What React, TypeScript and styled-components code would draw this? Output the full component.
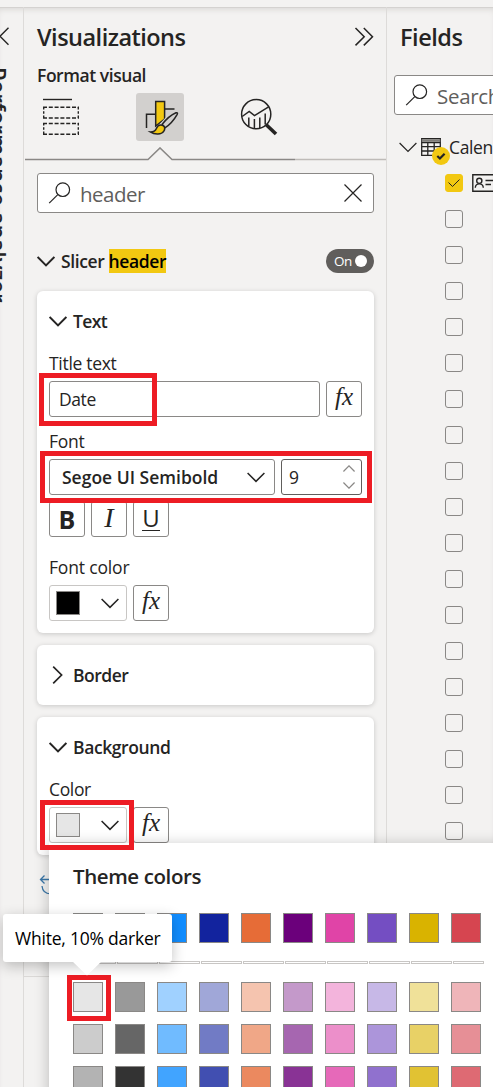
import React from 'react';
import styled, { createGlobalStyle } from 'styled-components';

const Global = createGlobalStyle`
  *, *::before, *::after { box-sizing: border-box; }
  html, body { margin: 0; padding: 0; overflow: hidden; background: #f3f2f1; }
  body { font-family: "Open Sans", "Noto Sans", sans-serif; color: #252423; font-size: 17.5px; }
  svg { display: block; flex: none; }
`;

const Shell = styled.div`
  position: relative;
  width: 493px;
  height: 1087px;
  overflow: hidden;
  display: flex;
  flex-direction: column;
  background: #f3f2f1;
`;
const TopBar = styled.div`
  height: 7px;
  flex: none;
`;
const Panes = styled.div`
  flex: 1;
  min-height: 0;
  display: flex;
  box-shadow: inset 0 1px 0 #d4d2d0, inset 0 5px 6px -3px #d6d4d2;
`;
const SidePane = styled.aside`
  width: 24px;
  flex: none;
  border-right: 1px solid #dddbd9;
  padding-top: 20px;
  overflow: hidden;
`;
const SideTitle = styled.div`
  writing-mode: vertical-rl;
  width: 34px;
  margin: 20px 0 0 -18px;
  line-height: 34px;
  font-size: 22px;
  font-weight: 600;
  white-space: nowrap;
  letter-spacing: 0.1px;
`;
const VizPane = styled.section`
  width: 363px;
  flex: none;
  border-right: 1px solid #dddbd9;
`;
const FieldsPane = styled.section`
  width: 106px;
  flex: none;
  overflow: hidden;
`;

type TextProps = { $size?: number; $weight?: number; $ls?: number; $color?: string };
const Text = styled.span<TextProps>`
  font-size: ${p => p.$size ?? 17.5}px;
  font-weight: ${p => p.$weight ?? 400};
  letter-spacing: ${p => p.$ls ?? 0}px;
  color: ${p => p.$color ?? 'inherit'};
  white-space: pre;
  line-height: 24px;
`;

const PaneHead = styled.header`
  display: flex;
  align-items: center;
  justify-content: space-between;
  height: 34px;
  margin: 13px 12px 0 13px;
`;
const SubHead = styled.div`
  height: 24px;
  margin: 9px 0 0 13px;
  display: flex;
`;
const ModeTabs = styled.nav`
  display: flex;
  gap: 51px;
  margin: 6px 0 0 13px;
  height: 48px;
`;
const ModeTab = styled.div<{ $active?: boolean }>`
  width: 48px;
  height: 48px;
  border-radius: 3px;
  background: ${p => (p.$active ? '#d2d0ce' : 'transparent')};
`;
const SearchBox = styled.div<{ $inset?: boolean }>`
  display: flex;
  align-items: center;
  width: ${p => (p.$inset ? 337 : 140)}px;
  height: 40px;
  margin: ${p => (p.$inset ? '12px 0 0 13px' : '21px 0 0 7px')};
  padding: 2px 11px 0 10px;
  gap: 9px;
  border: 1px solid #8a8886;
  border-radius: 3px;
  background: #fff;

  svg { margin-top: -2px; }
`;
const Grow = styled.div`
  flex: 1;
`;
const SectionRow = styled.div`
  display: flex;
  align-items: center;
  height: 24px;
  margin: 36px 12px 18px 13px;
  gap: 6px;
`;
const Mark = styled.mark`
  background: #f2c811;
  color: #000;
  height: 24px;
  display: inline-block;
`;
const Toggle = styled.div`
  width: 48px;
  height: 24px;
  border-radius: 12px;
  background: #605e5c;
  display: flex;
  align-items: center;
  justify-content: space-between;
  padding: 0 7px 0 8px;
`;
const Knob = styled.i`
  width: 12px;
  height: 12px;
  border-radius: 50%;
  background: #fff;
`;
const Cards = styled.div`
  display: flex;
  flex-direction: column;
  gap: 12px;
  margin: 0 12px 0 13px;
`;
const Card = styled.div<{ $h: number }>`
  height: ${p => p.$h}px;
  border-radius: 6px;
  background: #fff;
  box-shadow: 0 1px 5px rgba(0, 0, 0, 0.18);
  padding: 18px 12px 0;
`;
const CardHead = styled.div`
  display: flex;
  align-items: center;
  gap: 6px;
  height: 24px;
`;
const Label = styled.div<{ $top: number }>`
  height: 24px;
  margin: ${p => p.$top}px 0 6px;
  display: flex;
`;
const Controls = styled.div`
  position: relative;
  display: flex;
  gap: 6px;
`;
const ButtonStrip = styled.div`
  display: flex;
  gap: 6px;
  margin-top: 6px;
`;
const Field = styled.div<{ $w: number; $tone?: string; $pad?: string }>`
  width: ${p => p.$w}px;
  height: 36px;
  flex: none;
  border: 1px solid ${p => p.$tone ?? '#8a8886'};
  border-radius: 3px;
  background: #fff;
  display: flex;
  align-items: center;
  justify-content: space-between;
  padding: ${p => p.$pad ?? '0 9px'};
`;
const SquareButton = styled.button`
  width: 36px;
  height: 36px;
  padding: 0;
  border: 1px solid #8a8886;
  border-radius: 3px;
  background: #fff;
  color: #252423;
  font-family: inherit;
  display: flex;
  align-items: center;
  justify-content: center;
`;
const Fx = styled.span`
  font: italic 25px/30px "Liberation Serif", serif;
  margin-top: -5px;
`;
const ItalicGlyph = styled.span`
  font: italic 28px/30px "Liberation Serif", serif;
  margin-top: -3px;
`;
const Underlined = styled.span`
  font-size: 24px;
  line-height: 22px;
  height: 24px;
  margin-top: -1px;
  border-bottom: 1px solid #252423;
`;
const Chip = styled.i<{ $c: string }>`
  width: 24px;
  height: 24px;
  background: ${p => p.$c};
  border: 1px solid #8a8886;
`;
const Spinner = styled.div`
  display: flex;
  flex-direction: column;
  gap: 10px;
`;
const Callout = styled.div<{ $x: number; $y: number; $w: number; $h: number }>`
  position: absolute;
  left: ${p => p.$x}px;
  top: ${p => p.$y}px;
  width: ${p => p.$w}px;
  height: ${p => p.$h}px;
  border: 5px solid #ed1c24;
  z-index: 3;
`;
const Reset = styled.div`
  margin: 19px 0 0 15px;
`;
const Rule = styled.div`
  height: 1px;
  margin-top: 80px;
  background: #dddbd9;
`;

const TreeRow = styled.div`
  display: flex;
  align-items: center;
  height: 36px;
  margin: 14px 0 0 12px;
`;
const TableIcon = styled.div`
  position: relative;
  width: 20px;
  height: 18px;
  margin: 0 8px 0 4px;
`;
const Badge = styled.div`
  position: absolute;
  left: 11px;
  top: 9px;
`;
const FieldRow = styled.div`
  height: 36px;
  padding-left: 58px;
  display: flex;
  align-items: center;
  gap: 9px;
`;
const Check = styled.i<{ $on?: boolean }>`
  width: 18px;
  height: 18px;
  flex: none;
  border: 1px solid ${p => (p.$on ? '#f2c811' : '#8a8886')};
  border-radius: 3px;
  background: ${p => (p.$on ? '#f2c811' : 'transparent')};
`;

const Popup = styled.div`
  position: absolute;
  left: 49px;
  top: 843px;
  width: 470px;
  height: 270px;
  background: #fff;
  box-shadow: 0 2px 14px rgba(0, 0, 0, 0.24);
  padding: 21px 24px 0;
  z-index: 2;
`;
const PopupTitle = styled.div`
  height: 24px;
  display: flex;
`;
const Swatches = styled.div<{ $top: number }>`
  position: relative;
  display: grid;
  grid-template-columns: repeat(10, 30px);
  gap: 12px;
  margin-top: ${p => p.$top}px;
`;
const Swatch = styled.i<{ $c: string }>`
  height: 30px;
  background: ${p => p.$c};
  border: 1px solid #8a8886;
`;
const Divider = styled.div`
  display: flex;
  gap: 1px;
  margin: 18px 0 0 2px;
`;
const DividerCell = styled.i<{ $w: number }>`
  width: ${p => p.$w}px;
  height: 3px;
  flex: none;
  border: 1px solid #c8c6c4;
`;
const Tooltip = styled.div`
  position: absolute;
  left: 3px;
  top: 914px;
  width: 169px;
  height: 48px;
  border-radius: 3px;
  background: #fff;
  color: #000;
  box-shadow: 0 4px 14px rgba(0, 0, 0, 0.24);
  padding: 12px;
  display: flex;
  z-index: 4;
`;
const Pointer = styled.svg`
  position: absolute;
  left: 69px;
  top: 47px;
`;

const Down = ({ stroke = 1.5 }: { stroke?: number }) => (
  <svg width="18" height="11" viewBox="0 0 18 11" fill="none" stroke="#252423" strokeWidth={stroke}>
    <path d="M.6 1 9 9.4 17.4 1" />
  </svg>
);
const Right = () => (
  <svg width="18" height="18" viewBox="0 0 18 18" fill="none" stroke="#252423" strokeWidth="1.7">
    <path d="M4.2 .6 12.6 9 4.2 17.4" />
  </svg>
);
const Magnifier = () => (
  <svg width="23" height="22" viewBox="0 0 23 22" fill="none" stroke="#252423" strokeWidth="1.2">
    <circle cx="14.8" cy="7.7" r="6.8" />
    <path d="M9.8 12.6 1.2 21.2" />
  </svg>
);
const BuildIcon = () => (
  <svg width="48" height="48" viewBox="0 0 48 48" fill="none" stroke="#252423" strokeWidth="1.4">
    <path d="M6 6.5H35" />
    <g strokeDasharray="4 1.8">
      <path d="M6 14.3H42M6 25H42M6 30.5H42M6 41.3H42" />
    </g>
    <g strokeDasharray="2.6 1.6">
      <path d="M6.7 14V25.5M41.3 14V25.5M6.7 30V42M41.3 30V42" />
    </g>
  </svg>
);
const FormatIcon = () => (
  <svg width="48" height="48" viewBox="0 0 48 48" fill="none" stroke="#252423" strokeWidth="1.5">
    <path d="M10.5 35V21.3H19.5M29 16H38.5" />
    <path d="M19.7 8.5H28.6V26L19.7 33Z" fill="#f2c811" />
    <path d="M26.2 31.3C30 26.5 35 22 40 19.8 41.5 19.3 41.8 20 41.2 21.3 38 27 34 31.5 28.9 34.9Z" fill="#d2d0ce" stroke="#d2d0ce" strokeWidth="4" />
    <path d="M26.2 31.3C30 26.5 35 22 40 19.8 41.5 19.3 41.8 20 41.2 21.3 38 27 34 31.5 28.9 34.9Z" fill="#d2d0ce" />
    <path d="M26.3 32.3C29 33 29.4 36 27.7 38.4 25.5 41.6 19 42 14.2 38.9 18.5 39 19.5 37.8 20.4 35.5 21.5 32.6 24 31.6 26.3 32.3Z" fill="#f2c811" />
  </svg>
);
const AnalyticsIcon = () => (
  <svg width="48" height="48" viewBox="0 0 48 48" fill="none" stroke="#252423" strokeWidth="1.5">
    <circle cx="21.2" cy="21.2" r="14.6" />
    <path d="M7.2 23.5 14.2 18.5 19.5 22.7 33.6 13.8M13.8 24.5V33M19.4 26V35.5M24.8 24.5V35M30.2 20.5V31.5" />
    <path d="M31 31.5 41 41" strokeWidth="3.6" />
  </svg>
);
const TabLine = () => (
  <svg width="361" height="14" viewBox="0 0 361 14" fill="none" strokeWidth="1.5">
    <path d="M270 12.5H361" stroke="#bebbb8" />
    <path d="M0 12.5H123L135 .9 147 12.5H270" stroke="#8a8886" />
  </svg>
);
const TabLineWrap = styled.div`
  margin: 6px 0 0 1px;
`;

const baseColors = ['#ffffff', '#000000', '#118dff', '#12239e', '#e66c37', '#6b007b', '#e044a7', '#744ec2', '#d9b300', '#d64550'];
const shades = [
  ['#e6e6e6', '#999999', '#a0d1ff', '#a0a7d8', '#f5c4af', '#c499ca', '#f3b4dc', '#c7b8e7', '#f0e199', '#efb5b9'],
  ['#cccccc', '#666666', '#70bbff', '#717bc5', '#f0a787', '#a666b0', '#ec8fca', '#ac95da', '#e8d166', '#e68f96'],
  ['#b3b3b3', '#333333', '#41a4ff', '#414fb1', '#eb895f', '#893395', '#e669b9', '#9071ce', '#e1c233', '#de6a73'],
];
const dividerWidths = [41, 41, 41, 41, 41, 41, 41, 41, 41, 31];

const FxButton = () => (
  <SquareButton><Fx>fx</Fx></SquareButton>
);

export default function App() {
  return (
    <Shell>
      <Global />
      <TopBar />
      <Panes>
        <SidePane>
          <svg width="10" height="20" viewBox="0 0 10 20" fill="none" stroke="#252423" strokeWidth="1.4">
            <path d="M8.5 .8 0 9.3 8.5 17.8" />
          </svg>
          <SideTitle>Performance analyzer</SideTitle>
        </SidePane>
        <VizPane>
          <PaneHead>
            <Text $size={23.5} $weight={600} $ls={-0.52}>Visualizations</Text>
            <svg width="20" height="20" viewBox="0 0 20 20" fill="none" stroke="#252423" strokeWidth="1.5">
              <path d="M1.5 1 10.2 9.7 1.5 18.4M9.8 1 18.5 9.7 9.8 18.4" />
            </svg>
          </PaneHead>
          <SubHead><Text $weight={600} $ls={-0.44}>Format visual</Text></SubHead>
          <ModeTabs>
            <ModeTab><BuildIcon /></ModeTab>
            <ModeTab $active><FormatIcon /></ModeTab>
            <ModeTab><AnalyticsIcon /></ModeTab>
          </ModeTabs>
          <TabLineWrap><TabLine /></TabLineWrap>
          <SearchBox $inset>
            <Magnifier />
            <Text $size={20.5} $ls={-0.5} $color="#605e5c">header</Text>
            <Grow />
            <svg width="18" height="18" viewBox="0 0 18 18" fill="none" stroke="#252423" strokeWidth="1.2">
              <path d="M.5 .5 17.5 17.5M17.5 .5 .5 17.5" />
            </svg>
          </SearchBox>
          <SectionRow>
            <Down stroke={2} />
            <Text $weight={600} $ls={-0.38}>Slicer <Mark>header</Mark></Text>
            <Grow />
            <Toggle><Text $size={13.5} $ls={-0.4} $color="#fff">On</Text><Knob /></Toggle>
          </SectionRow>
          <Cards>
            <Card $h={342}>
              <CardHead><Down stroke={2} /><Text $weight={600} $ls={-0.6}>Text</Text></CardHead>
              <Label $top={18}><Text $ls={-0.3}>Title text</Text></Label>
              <Controls>
                <Field $w={271}><Text $ls={-0.4}>Date</Text></Field>
                <FxButton />
                <Callout $x={-10} $y={-8} $w={118} $h={53} />
              </Controls>
              <Label $top={12}><Text $ls={-0.25}>Font</Text></Label>
              <Controls>
                <Field $w={226} $pad="0 9px 0 12px"><Text $weight={600}>Segoe UI Semibold</Text><Down /></Field>
                <Field $w={81} $tone="#605e5c" $pad="0 6px 0 7px">
                  <Text>9</Text>
                  <Spinner>
                    <svg width="12" height="7" viewBox="0 0 12 7" fill="none" stroke="#8a8886" strokeWidth="1.3"><path d="M.4 6.5 6 .9 11.6 6.5" /></svg>
                    <svg width="12" height="7" viewBox="0 0 12 7" fill="none" stroke="#8a8886" strokeWidth="1.3"><path d="M.4 .5 6 6.1 11.6 .5" /></svg>
                  </Spinner>
                </Field>
                <Callout $x={-9} $y={-8} $w={332} $h={52} />
              </Controls>
              <ButtonStrip>
                <SquareButton><Text $size={25} $weight={700}>B</Text></SquareButton>
                <SquareButton><ItalicGlyph>I</ItalicGlyph></SquareButton>
                <SquareButton><Underlined>U</Underlined></SquareButton>
              </ButtonStrip>
              <Label $top={18}><Text $ls={-0.17}>Font color</Text></Label>
              <Controls>
                <Field $w={78} $tone="#c8c6c4" $pad="0 7px 0 6px"><Chip $c="#000" /><Down /></Field>
                <FxButton />
              </Controls>
            </Card>
            <Card $h={60}>
              <CardHead><Right /><Text $weight={600} $ls={-0.5}>Border</Text></CardHead>
            </Card>
            <Card $h={138}>
              <CardHead><Down stroke={2} /><Text $weight={600} $ls={-0.4}>Background</Text></CardHead>
              <Label $top={18}><Text $ls={-0.35}>Color</Text></Label>
              <Controls>
                <Field $w={78} $tone="#c8c6c4" $pad="0 7px 0 6px"><Chip $c="#e6e6e6" /><Down /></Field>
                <FxButton />
                <Callout $x={-9} $y={-7} $w={94} $h={50} />
              </Controls>
            </Card>
          </Cards>
          <Reset>
            <svg width="22" height="22" viewBox="0 0 22 22" fill="none" stroke="#3b77a8" strokeWidth="1.3">
              <path d="M5.5 1.5 1.5 5.5 5.5 9.5M1.5 5.5H12M3 12C3.5 17 7 19.8 11.5 19.8" />
            </svg>
          </Reset>
          <Rule />
        </VizPane>
        <FieldsPane>
          <PaneHead><Text $size={23.5} $weight={600} $ls={-0.45}>Fields</Text></PaneHead>
          <SearchBox>
            <Magnifier />
            <Text $size={20.5} $ls={-0.3} $color="#605e5c">Search</Text>
          </SearchBox>
          <TreeRow>
            <Down stroke={1.2} />
            <TableIcon>
              <svg width="20" height="18" viewBox="0 0 20 18" fill="none" stroke="#252423" strokeWidth="1.3">
                <path d="M.7 .7H19.3V17.3H.7ZM.7 4.5H19.3M.7 8.7H19.3M.7 13H19.3M6.8 4.5V17M13.2 4.5V17" />
                <path d="M.7 2.5H19.3" stroke="#7d7b79" strokeWidth="2.5" />
              </svg>
              <Badge>
                <svg width="18" height="18" viewBox="0 0 18 18" fill="none">
                  <circle cx="9" cy="9" r="9" fill="#f2c811" />
                  <path d="M5.3 9 7.9 11.5 12.6 6.8" stroke="#252423" strokeWidth="2.2" />
                </svg>
              </Badge>
            </TableIcon>
            <Text $ls={-0.35}>Calendar</Text>
          </TreeRow>
          <FieldRow>
            <Check $on>
              <svg width="16" height="16" viewBox="0 0 16 16" fill="none" stroke="#252423" strokeWidth="1"><path d="M2.5 7.5 6.5 11.5 13.5 4.5" /></svg>
            </Check>
            <svg width="27" height="18" viewBox="0 0 27 18" fill="none" stroke="#252423" strokeWidth="1.4">
              <path d="M.8 .8H26.2V17.2H.8Z" />
              <circle cx="7.3" cy="6.8" r="2.6" />
              <path d="M3.3 13.8C3.6 8.6 11 8.6 11.3 13.8M13.5 6.5H23M13.5 10.5H19" />
            </svg>
          </FieldRow>
          {Array.from({ length: 18 }, (_, i) => (
            <FieldRow key={i}><Check /></FieldRow>
          ))}
        </FieldsPane>
      </Panes>
      <Popup>
        <PopupTitle><Text $size={20.5} $weight={600} $ls={-0.4}>Theme colors</Text></PopupTitle>
        <Swatches $top={25}>
          {baseColors.map(c => <Swatch key={c} $c={c} />)}
        </Swatches>
        <Divider>
          {dividerWidths.map((w, i) => <DividerCell key={i} $w={w} />)}
        </Divider>
        <Swatches $top={18}>
          {shades.flat().map(c => <Swatch key={c} $c={c} />)}
          <Callout $x={-6} $y={-7} $w={44} $h={46} />
        </Swatches>
      </Popup>
      <Tooltip>
        <Text $ls={-0.22}>White, 10% darker</Text>
        <Pointer width="30" height="15" viewBox="0 0 30 15"><path d="M0 0H30L15 14.5Z" fill="#fff" /></Pointer>
      </Tooltip>
    </Shell>
  );
}
